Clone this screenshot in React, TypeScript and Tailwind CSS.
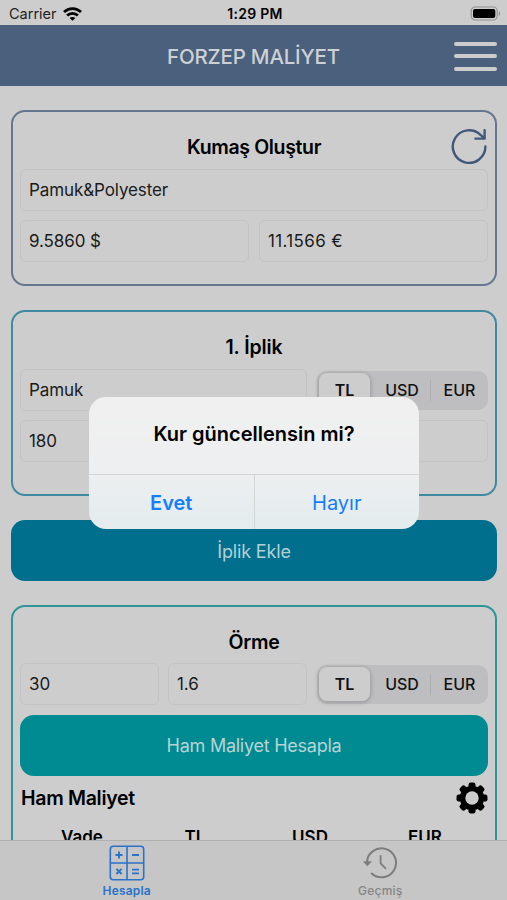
import React from 'react';

interface FieldProps {
  value?: string;
  className?: string;
  textClassName?: string;
}

const Field: React.FC<FieldProps> = ({ value = '', className = '', textClassName = 'tracking-[-0.1px]' }) => (
  <div className={`flex h-[42px] items-center rounded-[6px] border border-[#c3c3c4] px-2 pt-[2px] text-[17px] text-[#1b1b1b] ${className}`}>
    <span className={textClassName}>{value}</span>
  </div>
);

const CurrencyPicker: React.FC = () => (
  <div className="flex h-[39px] w-[171px] items-center rounded-[10px] bg-[#bebec0] p-[2px] text-[16px] font-medium text-[#111]">
    <div className="flex h-[34px] w-[51px] items-center justify-center rounded-[8px] bg-[#cdcdcd] font-semibold shadow-[0_1px_4px_1px_rgba(0,0,0,0.18)]">
      TL
    </div>
    <div className="ml-[4px] flex h-full w-[56px] items-center justify-center">USD</div>
    <div className="h-[21px] w-px bg-[#aeaeb1]" />
    <div className="flex h-full flex-1 items-center justify-center pl-[2px]">EUR</div>
  </div>
);

const WifiIcon: React.FC = () => (
  <svg width="19" height="14" viewBox="0 0 19 14" fill="none" stroke="#000" strokeWidth="2.8">
    <path d="M1 5.1C5.8.4 13.2.4 18 5.1" />
    <path d="M4.1 8.5c3-2.9 7.8-2.9 10.8 0" />
    <path d="M9.5 13.8 6.6 11c1.5-1.5 4.3-1.5 5.8 0z" fill="#000" stroke="none" />
  </svg>
);

const BatteryIcon: React.FC = () => (
  <svg width="31" height="15" viewBox="0 0 31 15">
    <rect x="1.2" y="1" width="26" height="13" rx="4" fill="none" stroke="#949494" strokeWidth="1.2" />
    <rect x="3" y="3" width="22.3" height="9" rx="2" fill="#000" />
    <path d="M28.8 5.2c1.9.7 1.9 3.9 0 4.6z" fill="#949494" />
  </svg>
);

const RefreshIcon: React.FC = () => (
  <svg width="38" height="38" viewBox="0 0 38 38" fill="none" stroke="#42587a" strokeWidth="2.4" strokeLinecap="round" strokeLinejoin="round">
    <path d="M35.4 19.4A16.3 16.3 0 1 1 30.8 8.2l3.4 3" />
    <path d="M34.6 3.2v8.4H25.4" />
  </svg>
);

const GearIcon: React.FC = () => (
  <svg width="32" height="32" viewBox="0 0 32 32">
    <g fill="#000">
      {[0, 45, 90, 135].map((angle) => (
        <rect key={angle} x="12.5" y="0.5" width="7" height="31" rx="2.2" transform={`rotate(${angle} 16 16)`} />
      ))}
      <circle cx="16" cy="16" r="12.2" />
    </g>
    <circle cx="16" cy="16" r="6.7" fill="#cdcdcd" />
  </svg>
);

const CalculatorIcon: React.FC = () => (
  <svg width="36" height="36" viewBox="0 0 36 36" fill="none" stroke="#2a72ca" strokeWidth="1.6">
    <rect x="1.3" y="1.3" width="33.4" height="33.4" rx="3" />
    <path d="M18 1.3v33.4M1.3 18h33.4" />
    <path d="M6.5 10h7M10 6.5v7M23 10h7M7.4 23.8l5.2 5.2M12.6 23.8 7.4 29M23 24.6h7M23 28.4h7" strokeWidth="1.9" />
  </svg>
);

const HistoryIcon: React.FC = () => (
  <svg width="36" height="34" viewBox="0 0 36 34" fill="none" stroke="#7d7d7d" strokeWidth="2">
    <path d="M5 16.4A14.5 14.5 0 1 1 9.2 27" />
    <path d="M18.6 9.2v8.2l5.4 5.4" strokeWidth="1.8" />
    <path d="M0.8 15.2h9.2l-4.6 5z" fill="#7d7d7d" stroke="none" />
  </svg>
);

const App: React.FC = () => {
  return (
    <div className="relative flex h-[900px] w-[507px] flex-col overflow-hidden bg-[#cdcdcd] font-['Inter','Liberation_Sans',sans-serif] text-black">
      {/* Status bar */}
      <div className="grid h-[25px] shrink-0 grid-cols-3 items-center pt-[2px] pr-[6px] pl-[9px] text-[14px] leading-none">
        <div className="flex items-center gap-[6px] text-[#222]">
          <span className="pt-[2px] text-[14.5px]">Carrier</span>
          <WifiIcon />
        </div>
        <div className="text-center text-[14px] font-semibold tracking-[0.3px]">1:29 PM</div>
        <div className="flex justify-end">
          <BatteryIcon />
        </div>
      </div>

      {/* Header */}
      <header className="grid h-[61px] shrink-0 grid-cols-[1fr_auto_1fr] items-center bg-[#4a607d] px-[10px]">
        <div />
        <h1 className="pt-[3px] text-[20.5px] font-medium tracking-[-0.2px] text-[#cdd0d4]">FORZEP MALİYET</h1>
        <div className="flex flex-col gap-[8.5px] justify-self-end pt-[1px]">
          <div className="h-[4px] w-[43px] rounded-full bg-[#cdcdcd]" />
          <div className="h-[4px] w-[43px] rounded-full bg-[#cdcdcd]" />
          <div className="h-[4px] w-[43px] rounded-full bg-[#cdcdcd]" />
        </div>
      </header>

      <main className="flex min-h-0 flex-1 flex-col overflow-hidden pt-[24px] pr-[10px] pl-[11px]">
        {/* Fabric */}
        <section className="h-[176px] w-full shrink-0 rounded-[14px] border-2 border-[#65778f] px-[7px]">
          <div className="grid h-[57px] grid-cols-[1fr_auto_1fr] items-center">
            <div />
            <h2 className="pt-[14px] text-[19.5px] font-semibold tracking-[-0.35px]">Kumaş Oluştur</h2>
            <div className="justify-self-end pt-[10px]">
              <RefreshIcon />
            </div>
          </div>
          <Field value="Pamuk&Polyester" />
          <div className="mt-[9px] grid grid-cols-2 gap-[10px]">
            <Field value="9.5860 $" />
            <Field value="11.1566 €" textClassName="tracking-[0.35px]" />
          </div>
        </section>

        {/* Yarn */}
        <section className="mt-[24px] h-[186px] w-full shrink-0 rounded-[14px] border-2 border-[#3f8aa0] px-[7px]">
          <h2 className="flex h-[57px] items-center justify-center pt-[14px] text-[19.5px] font-semibold tracking-[-0.1px]">1. İplik</h2>
          <div className="flex items-center justify-between">
            <Field value="Pamuk" className="w-[287px]" />
            <CurrencyPicker />
          </div>
          <Field value="180" className="mt-[9px]" />
        </section>

        <button className="mt-[24px] h-[61px] w-full shrink-0 rounded-[14px] bg-[#006f8e] pt-px text-[18px] tracking-[-0.15px] text-[#b3cfd6]">
          İplik Ekle
        </button>

        {/* Knitting */}
        <section className="mt-[24px] h-[300px] w-full shrink-0 rounded-[14px] border-2 border-[#2f9697] px-[7px]">
          <h2 className="flex h-[56px] items-center justify-center pt-[16px] text-[19.5px] font-semibold tracking-[-0.3px]">Örme</h2>
          <div className="flex items-center">
            <Field value="30" className="w-[139px]" />
            <Field value="1.6" className="mr-[10px] ml-[9px] w-[139px]" />
            <CurrencyPicker />
          </div>
          <button className="mt-[10px] h-[61px] w-full rounded-[14px] bg-[#008b92] text-[18px] tracking-[-0.25px] text-[#b5d3d4]">
            Ham Maliyet Hesapla
          </button>
          <div className="flex h-[43px] items-center justify-between pl-[1px]">
            <h3 className="pt-[2px] text-[19.5px] font-semibold tracking-[-0.3px]">Ham Maliyet</h3>
            <GearIcon />
          </div>
          <div className="flex h-[38px] items-center pl-[4px] text-[17px] font-semibold">
            <span className="w-[116px] text-center">Vade</span>
            <span className="w-[110px] text-center">TL</span>
            <span className="w-[120px] text-center">USD</span>
            <span className="w-[110px] text-center">EUR</span>
          </div>
        </section>
      </main>

      {/* Tab bar */}
      <nav className="flex h-[60px] shrink-0 border-t border-[#b0b0b0] bg-[#c6c6c6] text-[12px] leading-none">
        <div className="flex flex-1 flex-col items-center pt-[4px] font-semibold text-[#2a72ca]">
          <CalculatorIcon />
          <span className="mt-[4px] tracking-[0.2px]">Hesapla</span>
        </div>
        <div className="flex flex-1 flex-col items-center pt-[5px] font-medium text-[#858585]">
          <HistoryIcon />
          <span className="mt-[5px] tracking-[0.2px]">Geçmiş</span>
        </div>
      </nav>

      {/* Alert */}
      <div className="absolute top-[397px] left-[89px] flex h-[132px] w-[330px] flex-col overflow-hidden rounded-[17px] bg-linear-to-b from-[#f0f0f0] via-[#eeeff0] to-[#e4ecee]">
        <div className="flex h-[77px] items-center justify-center pb-[3px] text-[20px] font-semibold">Kur güncellensin mi?</div>
        <div className="flex flex-1 border-t border-[#d2d6d7] text-[20px] text-[#157efb]">
          <button className="flex-1 border-r border-[#d2d6d7] pt-[2px] font-semibold">Evet</button>
          <button className="flex-1 pt-[2px]">Hayır</button>
        </div>
      </div>
    </div>
  );
};

export default App;
